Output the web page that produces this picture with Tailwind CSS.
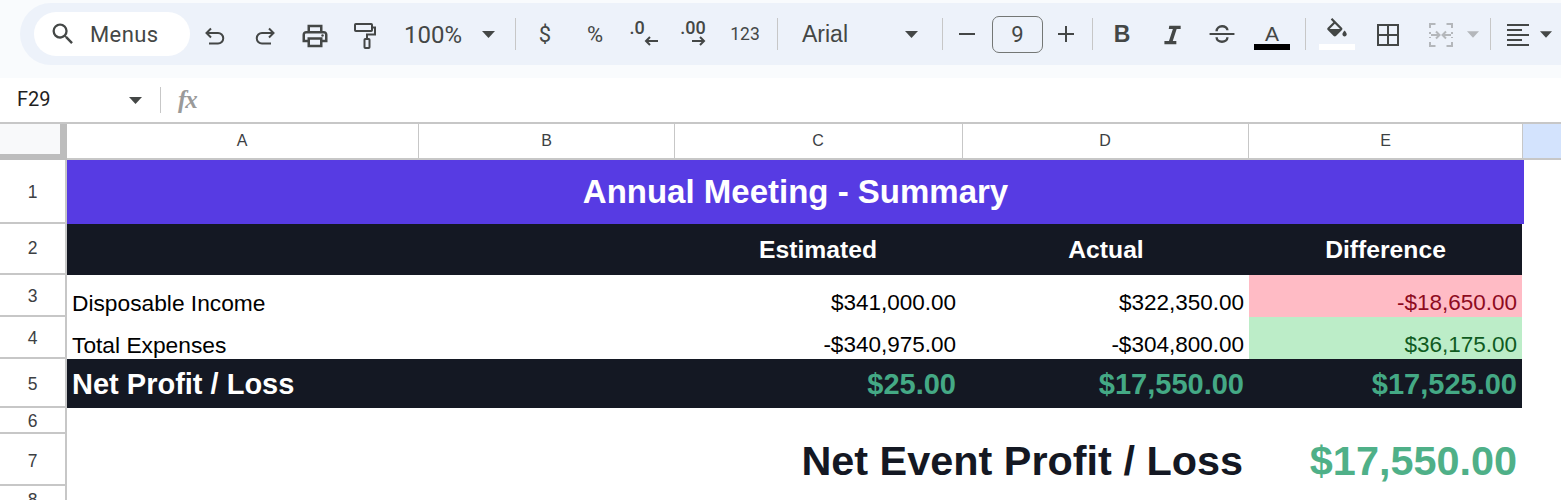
<!doctype html>
<html>
<head>
<meta charset="utf-8">
<script src="https://cdn.jsdelivr.net/npm/@tailwindcss/browser@4"></script>
</head>
<body class="bg-white overflow-hidden">
<div class="w-[1561px] h-[500px] overflow-hidden bg-white font-['Liberation_Sans',sans-serif]">
  <!-- toolbar -->
  <div class="h-[78px] bg-[#f9fbfd] pt-[3px]">
    <div class="ml-[20px] h-[62px] bg-[#edf2fa] rounded-l-[31px] flex items-center text-[#444746] font-['Roboto',sans-serif]">
      <div class="ml-[14px] w-[156px] h-[44px] bg-white rounded-full flex items-center pl-[15px] shrink-0">
        <svg class="w-[28px] h-[28px]" viewBox="0 0 24 24" fill="#444746"><path d="M15.500 14h-.79l-.28-.27A6.470 6.470 0 0 0 16 9.500 6.500 6.500 0 1 0 9.500 16c1.610 0 3.090-.59 4.230-1.570l.27.28v.79l5 4.990L20.490 19l-4.990-5zm-6 0C7.010 14 5 11.990 5 9.500S7.010 5 9.500 5 14 7.010 14 9.500 11.990 14 9.500 14z"/></svg>
        <span class="ml-[13px] text-[22px] tracking-[0.4px]">Menus</span>
      </div>
      <div class="w-[50px] flex justify-center shrink-0"><svg class="w-[24px] h-[24px] mt-[4px]" viewBox="0 0 24 24" fill="none" stroke="#444746" stroke-width="2"><path d="M8 4.500 3.500 9 8 13.500M3.500 9H15a5 5 0 0 1 0 10.500H6"/></svg></div>
      <div class="w-[50px] flex justify-center shrink-0"><svg class="w-[24px] h-[24px] mt-[4px]" viewBox="0 0 24 24" fill="none" stroke="#444746" stroke-width="2"><path d="M16 4.500 20.500 9 16 13.500M20.500 9H9a5 5 0 0 0 0 10.500H18"/></svg></div>
      <div class="w-[50px] flex justify-center shrink-0"><svg class="w-[30px] h-[30px] mt-[3px]" viewBox="0 0 24 24" fill="#444746"><path d="M19 8h-1V3H6v5H5c-1.660 0-3 1.340-3 3v6h4v4h12v-4h4v-6c0-1.660-1.340-3-3-3zM8 5h8v3H8V5zm8 12v2H8v-4h8v2zm2-2v-2H6v2H4v-4c0-.55.45-1 1-1h14c.55 0 1 .45 1 1v4h-2z"/><circle cx="18" cy="11.500" r="1"/></svg></div>
      <div class="w-[50px] flex justify-center shrink-0"><svg class="w-[24px] h-[27px] mt-[3px]" viewBox="0 0 24 27" fill="none" stroke="#444746" stroke-width="2"><rect x="2" y="2" width="17" height="7" rx=".8"/><path d="M19 5.500h3v7H14V17"/><rect x="11.500" y="17" width="5" height="9" rx=".8"/></svg></div>
      <span class="ml-[14px] w-[78px] text-[24px] mt-[2px] shrink-0">100%</span>
      <svg class="w-[13px] h-[7px] shrink-0" viewBox="0 0 13 7" fill="#444746"><path d="M0 0h13L6.500 7z"/></svg>
      <div class="ml-[20px] w-px h-[32px] bg-[#c7c7c7] shrink-0"></div>
      <div class="ml-[4px] w-[50px] text-center text-[22px] shrink-0">$</div>
      <div class="w-[50px] text-center text-[22px] shrink-0">%</div>
      <div class="w-[50px] flex flex-col items-center shrink-0">
        <span class="text-[18px] font-medium leading-[18px] -ml-[16px] -mt-[3px]">.0</span>
        <svg class="w-[14px] h-[10px] ml-[12px] -mt-[1px]" viewBox="0 0 14 10" fill="none" stroke="#444746" stroke-width="2"><path d="M14 5H2M6 1 2 5l4 4"/></svg>
      </div>
      <div class="w-[50px] flex flex-col items-center shrink-0">
        <span class="text-[18px] font-medium leading-[18px] -ml-[4px] -mt-[3px]">.00</span>
        <svg class="w-[14px] h-[10px] ml-[8px] -mt-[1px]" viewBox="0 0 14 10" fill="none" stroke="#444746" stroke-width="2"><path d="M0 5h12M8 1l4 4-4 4"/></svg>
      </div>
      <div class="w-[50px] text-center text-[17.500px] shrink-0">123</div>
      <div class="ml-[7px] w-px h-[32px] bg-[#c7c7c7] shrink-0"></div>
      <span class="ml-[24px] w-[103px] text-[23px] font-['Liberation_Sans',sans-serif] shrink-0">Arial</span>
      <svg class="w-[13px] h-[7px] shrink-0" viewBox="0 0 13 7" fill="#444746"><path d="M0 0h13L6.500 7z"/></svg>
      <div class="ml-[24px] w-px h-[32px] bg-[#c7c7c7] shrink-0"></div>
      <div class="w-[48px] flex justify-center shrink-0"><div class="w-[16px] h-[2px] bg-[#444746]"></div></div>
      <div class="ml-px w-[51px] h-[37px] border-[1.500px] border-[#747775] rounded-[7px] flex items-center justify-center text-[22px] shrink-0">9</div>
      <div class="w-[46px] flex justify-center shrink-0"><svg class="w-[16px] h-[16px]" viewBox="0 0 16 16" fill="none" stroke="#444746" stroke-width="2"><path d="M8 0v16M0 8h16"/></svg></div>
      <div class="ml-[3px] w-px h-[32px] bg-[#c7c7c7] shrink-0"></div>
      <div class="ml-[4px] w-[50px] text-center text-[23px] font-bold font-['Liberation_Sans',sans-serif] mt-[1px] shrink-0">B</div>
      <div class="w-[50px] flex justify-center shrink-0"><svg class="w-[26px] h-[26px] mt-[1px]" viewBox="0 0 24 24" fill="#444746"><path d="M9.500 3.500H20v3h-3.700L12.700 17.500H16v3H5v-3h4.200L12.800 6.500H9z"/></svg></div>
      <div class="w-[50px] flex justify-center shrink-0"><svg class="w-[26px] h-[26px]" viewBox="0 0 24 24" fill="none" stroke="#444746" stroke-width="2.200"><path d="M0.500 12h23" stroke-width="1.800"/><path d="M7 9.500C7 3.500 17 3.500 17 8.500M7 15c0 5.500 10 5.500 10 0"/></svg></div>
      <div class="w-[50px] flex flex-col items-center shrink-0">
        <span class="text-[21px] leading-[20px] font-['Liberation_Sans',sans-serif] mt-[6px]">A</span>
        <div class="w-[36px] h-[6px] bg-black"></div>
      </div>
      <div class="ml-[8px] w-px h-[32px] bg-[#c7c7c7] shrink-0"></div>
      <div class="ml-[6px] w-[50px] flex flex-col items-center shrink-0">
        <svg class="w-[26px] h-[24px]" viewBox="0 0 24 22" fill="#444746"><path d="M16.560 8.940 7.620 0 6.210 1.410l2.380 2.380-5.150 5.150c-.59.59-.59 1.540 0 2.120l5.500 5.500c.29.290.68.44 1.060.44s.77-.15 1.060-.44l5.500-5.500c.59-.58.59-1.530 0-2.120zM5.210 10 10 5.210 14.790 10H5.210zM19 11.500s-2 2.170-2 3.500c0 1.100.9 2 2 2s2-.9 2-2c0-1.330-2-3.500-2-3.500z"/><path d="M4 10h12l-6 6z"/></svg>
        <div class="w-[36px] h-[6px] bg-white mt-[2px]"></div>
      </div>
      <div class="ml-px w-[50px] flex justify-center shrink-0"><svg class="w-[22px] h-[22px] mt-[1px]" viewBox="0 0 22 22" fill="none" stroke="#444746" stroke-width="2"><path d="M1 1h20v20H1zM11 1v20M1 11h20"/></svg></div>
      <div class="ml-[3px] w-[50px] flex justify-center shrink-0"><svg class="w-[24px] h-[24px] mt-[1px]" viewBox="0 0 24 24" fill="none" stroke="#b4b7bb" stroke-width="2"><path d="M6.500 1H1v4M1 19v4h5.500M17.500 1H23v4M23 19v4h-5.500M1 9v2M1 14v1M23 9v2M23 14v1"/><path d="M2 12h8M7 8.500l3.500 3.500L7 15.500M22 12h-8M17 8.500 13.500 12l3.500 3.500"/></svg></div>
      <svg class="ml-px w-[12px] h-[7px] shrink-0" viewBox="0 0 13 7" fill="#b4b7bb"><path d="M0 0h13L6.500 7z"/></svg>
      <div class="ml-[11px] w-px h-[32px] bg-[#c7c7c7] shrink-0"></div>
      <div class="w-[54px] flex justify-center shrink-0"><svg class="w-[22px] h-[22px] mt-[1px]" viewBox="0 0 22 22" fill="none" stroke="#444746" stroke-width="2"><path d="M0 1h22M0 6h15M0 11h22M0 16h15M0 21h22"/></svg></div>
      <svg class="-ml-[5px] w-[12px] h-[7px] shrink-0" viewBox="0 0 13 7" fill="#444746"><path d="M0 0h13L6.500 7z"/></svg>
    </div>
  </div>
  <!-- formula bar -->
  <div class="h-[44px] bg-white flex items-center">
    <span class="ml-[17px] w-[112px] text-[20px] text-[#1f1f1f] font-['Roboto',sans-serif] -mt-[3px]">F29</span>
    <svg class="w-[13px] h-[7px]" viewBox="0 0 13 7" fill="#444746"><path d="M0 0h13L6.500 7z"/></svg>
    <div class="ml-[18px] w-px h-[26px] bg-[#c7c7c7]"></div>
    <span class="ml-[17px] text-[25px] leading-none font-bold italic text-[#9a9a9a] font-['Liberation_Serif',serif] tracking-[-1px] -mt-[2px]">fx</span>
  </div>
  <!-- sheet -->
  <div class="grid grid-cols-[67px_352px_256px_288px_286px_274px_38px] grid-rows-[38px_64px_51px_42px_42px_49px_26px_52px_14px] text-black">
    <!-- column header -->
    <div class="relative bg-[#f8f9fa] border-t-2 border-[#c7c7c7] h-[38px] box-border">
      <div class="absolute right-0 top-0 w-[7px] h-full bg-[#bdbdbd]"></div>
      <div class="absolute left-0 bottom-0 h-[6px] w-full bg-[#bdbdbd]"></div>
    </div>
    <div class="border-t-2 border-b-2 border-r border-[#c7c7c7] flex items-center justify-center text-[16px] text-[#3c4043] pr-[1px]">A</div>
    <div class="border-t-2 border-b-2 border-r border-[#c7c7c7] flex items-center justify-center text-[16px] text-[#3c4043]">B</div>
    <div class="border-t-2 border-b-2 border-r border-[#c7c7c7] flex items-center justify-center text-[16px] text-[#3c4043] pr-[1px]">C</div>
    <div class="border-t-2 border-b-2 border-r border-[#c7c7c7] flex items-center justify-center text-[16px] text-[#3c4043] pr-[1px]">D</div>
    <div class="border-t-2 border-b-2 border-r border-[#c7c7c7] flex items-center justify-center text-[16px] text-[#3c4043]">E</div>
    <div class="border-t-2 border-b-2 border-[#c7c7c7] bg-[#d3e3fd]"></div>

    <!-- row 1 -->
    <div class="border-r-2 border-b-2 border-[#c7c7c7] flex items-center justify-center text-[17.500px] text-[#3c4043] pt-[3px]">1</div>
    <div class="col-span-5 -mr-px bg-[#573be3] flex items-center justify-center text-white font-bold text-[33px]">Annual Meeting - Summary</div>
    <div></div>

    <!-- row 2 -->
    <div class="border-r-2 border-b-2 border-[#c7c7c7] flex items-center justify-center text-[17.500px] text-[#3c4043]">2</div>
    <div class="bg-[#141823]"></div>
    <div class="bg-[#141823]"></div>
    <div class="bg-[#141823] flex items-center justify-center pr-[2px] text-white font-bold text-[24.700px]">Estimated</div>
    <div class="bg-[#141823] flex items-center justify-center text-white font-bold text-[24.700px]">Actual</div>
    <div class="bg-[#141823] mr-px flex items-center justify-center text-white font-bold text-[24.700px]">Difference</div>
    <div></div>

    <!-- row 3 -->
    <div class="border-r-2 border-b-2 border-[#c7c7c7] flex items-center justify-center text-[17.500px] text-[#3c4043] pt-[2px]">3</div>
    <div class="flex items-end pl-[5px] text-[22.750px] leading-[26px] pb-[1px]">Disposable Income</div>
    <div></div>
    <div class="flex items-end justify-end pr-[7px] text-[22.500px] leading-[26px] pb-[1px]">$341,000.00</div>
    <div class="flex items-end justify-end pr-[5px] text-[22.500px] leading-[26px] pb-[1px]">$322,350.00</div>
    <div class="bg-[#ffbbc5] mr-px flex items-end justify-end pr-[5px] text-[22.500px] leading-[26px] pb-[1px] text-[#8e0b1f]">-$18,650.00</div>
    <div></div>

    <!-- row 4 -->
    <div class="border-r-2 border-b-2 border-[#c7c7c7] flex items-center justify-center text-[17.500px] text-[#3c4043] pt-[2px]">4</div>
    <div class="flex items-end pl-[5px] text-[22.750px] leading-[26px] pb-[1px]">Total Expenses</div>
    <div></div>
    <div class="flex items-end justify-end pr-[7px] text-[22.500px] leading-[26px] pb-[1px]">-$340,975.00</div>
    <div class="flex items-end justify-end pr-[5px] text-[22.500px] leading-[26px] pb-[1px]">-$304,800.00</div>
    <div class="bg-[#bcedc8] mr-px flex items-end justify-end pr-[5px] text-[22.500px] leading-[26px] pb-[1px] text-[#0f5b1f]">$36,175.00</div>
    <div></div>

    <!-- row 5 -->
    <div class="border-r-2 border-b-2 border-[#c7c7c7] flex items-center justify-center text-[17.500px] text-[#3c4043] pt-[4px]">5</div>
    <div class="bg-[#141823] flex items-center pl-[5px] pt-[3px] text-white font-bold text-[29px]">Net Profit / Loss</div>
    <div class="bg-[#141823]"></div>
    <div class="bg-[#141823] flex items-center justify-end pr-[7px] pt-[3px] text-[#44a985] font-bold text-[29px]">$25.00</div>
    <div class="bg-[#141823] flex items-center justify-end pr-[5px] pt-[3px] text-[#44a985] font-bold text-[29px]">$17,550.00</div>
    <div class="bg-[#141823] mr-px flex items-center justify-end pr-[5px] pt-[3px] text-[#44a985] font-bold text-[29px]">$17,525.00</div>
    <div></div>

    <!-- row 6 -->
    <div class="border-r-2 border-b-2 border-[#c7c7c7] flex items-center justify-center text-[17.500px] text-[#3c4043] pt-[3px]">6</div>
    <div class="col-span-6"></div>

    <!-- row 7 -->
    <div class="border-r-2 border-b-2 border-[#c7c7c7] flex items-center justify-center text-[17.500px] text-[#3c4043] pt-[4px]">7</div>
    <div class="col-span-4 flex items-center justify-end pr-[6px] pt-[2px] text-[#141823] font-bold text-[41.400px] whitespace-nowrap">Net Event Profit / Loss</div>
    <div class="flex items-center justify-end pr-[6px] pt-[2px] text-[#4fb088] font-bold text-[41.400px] whitespace-nowrap">$17,550.00</div>
    <div></div>

    <!-- row 8 -->
    <div class="border-r-2 border-[#c7c7c7] flex items-start justify-center text-[17.500px] text-[#3c4043] pt-[1px]">8</div>
    <div class="col-span-6"></div>
  </div>
</div>
</body>
</html>
